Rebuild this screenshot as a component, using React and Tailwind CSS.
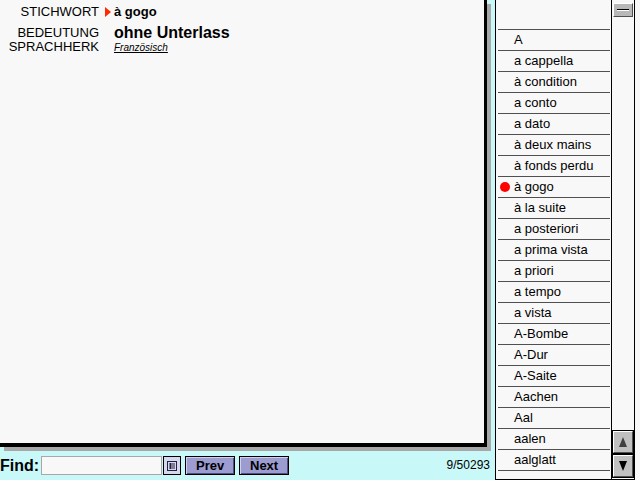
const rows = [
  "A",
  "a cappella",
  "à condition",
  "a conto",
  "a dato",
  "à deux mains",
  "à fonds perdu",
  "à gogo",
  "à la suite",
  "a posteriori",
  "a prima vista",
  "a priori",
  "a tempo",
  "a vista",
  "A-Bombe",
  "A-Dur",
  "A-Saite",
  "Aachen",
  "Aal",
  "aalen",
  "aalglatt",
];

function Entry() {
  return (
    <div className="w-[487px] h-[447px] bg-[#f8f8f8] border-r-[3px] border-b-4 border-black shadow-[4px_4px_0_#a8a8a8] pt-[5px]">
      {/* Stichwort */}
      <div className="flex items-center h-[14px]">
        <div className="w-[99px] text-right text-[13px] leading-[14px] text-black">STICHWORT</div>
        <div className="ml-[6px] w-0 h-0 border-y-[5px] border-y-transparent border-l-[6px] border-l-[#ff2a00]" />
        <div className="ml-[3px] text-[13px] leading-[14px] font-bold text-black">à gogo</div>
      </div>
      {/* Bedeutung / Herkunft */}
      <div className="flex mt-[7px]">
        <div className="w-[99px] text-right text-[13px] leading-[14px] text-black">
          <div>BEDEUTUNG</div>
          <div>SPRACHHERK</div>
        </div>
        <div className="ml-[15px]">
          <div className="text-[16px] leading-[16px] font-bold text-black -mt-[1px]">ohne Unterlass</div>
          <div className="text-[10px] leading-[12px] italic underline text-black mt-[1px]">Französisch</div>
        </div>
      </div>
    </div>
  );
}

function FindBar() {
  return (
    <div className="flex items-center h-[33px] pt-[4px]">
      <span className="text-[16px] font-bold leading-[19px] text-black">Find:</span>
      <div className="ml-[2px] w-[121px] h-[19px] bg-[#f8f8f8] border border-[#a8a8a8]" />
      <button className="ml-[1px] w-[18px] h-[19px] border border-black bg-[#d8d8ec] flex items-center justify-center">
        <svg width="10" height="10" viewBox="0 0 10 10">
          <rect x="0.5" y="0.5" width="9" height="9" fill="none" stroke="#202040" />
          <line x1="2" y1="3" x2="8" y2="3" stroke="#202040" />
          <line x1="2" y1="5" x2="8" y2="5" stroke="#202040" />
          <line x1="2" y1="7" x2="8" y2="7" stroke="#202040" />
          <line x1="3.5" y1="2" x2="3.5" y2="8" stroke="#202040" />
        </svg>
      </button>
      <button className="ml-[4px] w-[50px] h-[19px] border border-black bg-[#9c9cd0] shadow-[inset_1px_1px_0_#d0d0f0,inset_-1px_-1px_0_#505080] text-[13px] font-bold leading-[17px] text-black">
        Prev
      </button>
      <button className="ml-[4px] w-[50px] h-[19px] border border-black bg-[#9c9cd0] shadow-[inset_1px_1px_0_#d0d0f0,inset_-1px_-1px_0_#505080] text-[13px] font-bold leading-[17px] text-black">
        Next
      </button>
      <span className="ml-auto mr-[5px] text-[12px] leading-[19px] text-black">9/50293</span>
    </div>
  );
}

function ScrollBtn({ children }) {
  return (
    <div className="w-[20px] h-[22px] bg-[#c0c0c0] border border-t-white border-l-white border-b-[#505050] border-r-[#505050] outline outline-1 outline-black flex items-center justify-center">
      {children}
    </div>
  );
}

function WordList() {
  return (
    <div className="w-[140px] h-[480px] bg-[#f8f8f8] border-x border-b border-black flex">
      <div className="w-[115px] pl-[2px] pr-[1px]">
        <div className="h-[29px]" />
        <div className="border-t border-[#505050]">
          {rows.map((r) => (
            <div key={r} className="relative h-[21px] border-b border-[#505050] flex items-center pl-[16px] text-[13px] text-black">
              {r === "à gogo" && (
                <div className="absolute left-[2px] top-[5px] w-[10px] h-[10px] rounded-full bg-[#ff0000]" />
              )}
              {r}
            </div>
          ))}
        </div>
      </div>
      <div className="w-[23px] border-l border-black flex flex-col items-center pt-[3px] pb-[2px]">
        <div className="w-[20px] h-[14px] bg-[#b8b8b8] border border-t-white border-l-white border-b-[#505050] border-r-[#505050] flex items-center justify-center">
          <div className="w-[12px] h-[2px] border-t border-black border-b border-b-white" />
        </div>
        <div className="flex-1" />
        <ScrollBtn>
          <svg width="10" height="12" viewBox="0 0 10 12">
            <polygon points="5,1 9,11 1,11" fill="#404040" />
          </svg>
        </ScrollBtn>
        <div className="h-[2px]" />
        <ScrollBtn>
          <svg width="10" height="12" viewBox="0 0 10 12">
            <polygon points="1,1 9,1 5,11" fill="#000" />
          </svg>
        </ScrollBtn>
      </div>
    </div>
  );
}

export default function App() {
  return (
    <div className="w-[640px] h-[480px] overflow-hidden bg-[#c8f8f8] flex font-['Liberation_Sans',Arial,sans-serif]">
      <div className="w-[495px] flex flex-col">
        <Entry />
        <FindBar />
      </div>
      <WordList />
      <div className="flex-1 bg-[#f8f8f8]" />
    </div>
  );
}
